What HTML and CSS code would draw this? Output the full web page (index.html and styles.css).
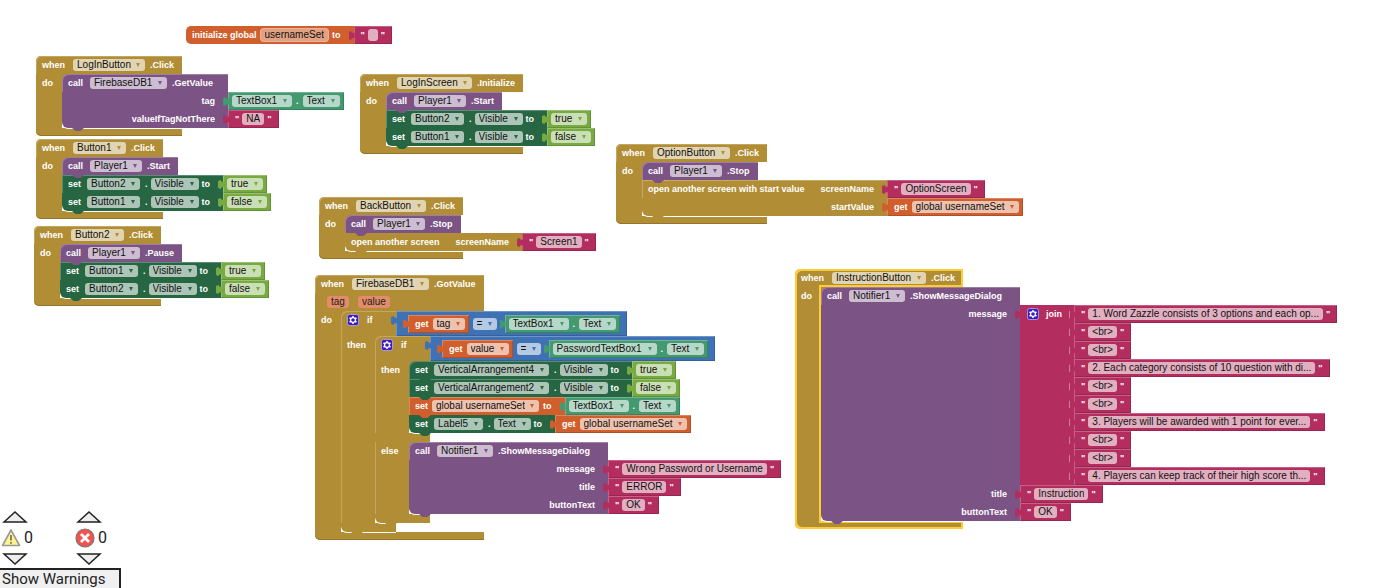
FILE: index.html
```html
<!DOCTYPE html>
<html lang="en">
<head>
<meta charset="utf-8">
<title>Blocks workspace</title>
<link rel="stylesheet" href="styles.css">
</head>
<body>
<svg class="defs" aria-hidden="true">
  <symbol id="gear" viewBox="0 0 12 12">
    <rect x=".5" y=".5" width="11" height="11" rx="2" fill="#3a1cc0" stroke="#b9aee6" stroke-width=".8"/>
    <path d="M6 2v8M2.500 4l7 4M2.500 8l7-4" stroke="#fff" stroke-width="1.500"/>
    <circle cx="6" cy="6" r="2.400" fill="#3a1cc0" stroke="#fff" stroke-width="1.200"/>
  </symbol>
</svg>
<main class="workspace">

  <div class="root at-global line">
    <div class="label orange arg rounded">initialize global <input class="name" aria-label="Variable name" value="usernameSet"> to</div>
    <div class="value text pink">"<input class="blank" aria-label="Initial value" value=" ">"</div>
  </div>

  <section class="root event at-login">
    <div class="head gold">when <span class="pick"><select aria-label="Component"><option>LogInButton</option></select></span><span>.Click</span></div>
    <div class="body">
      <div class="rail gold">do</div>
      <div class="stack">
        <div class="stmt purple">
          <div class="label arg call">call <span class="pick"><select aria-label="Component"><option>FirebaseDB1</option></select></span><span>.GetValue</span></div>
          <div class="label arg param">tag</div>
          <div class="value teal"><span class="pick"><select aria-label="Component"><option>TextBox1</option></select></span>.<span class="pick"><select aria-label="Property"><option>Text</option></select></span></div>
          <div class="label arg param">valueIfTagNotThere</div>
          <div class="value text pink">"<input aria-label="Default value" value="NA">"</div>
        </div>
      </div>
    </div>
    <div class="foot gold"></div>
  </section>

  <section class="root event at-button1">
    <div class="head gold">when <span class="pick"><select aria-label="Component"><option>Button1</option></select></span><span>.Click</span></div>
    <div class="body">
      <div class="rail gold">do</div>
      <div class="stack">
        <div class="stmt purple">
          <div class="label">call <span class="pick"><select aria-label="Component"><option>Player1</option></select></span><span>.Start</span></div>
        </div>
        <div class="stmt green">
          <div class="label arg set">set <span class="pick"><select aria-label="Component"><option>Button2</option></select></span>.<span class="pick"><select aria-label="Property"><option>Visible</option></select></span><span>to</span></div>
          <div class="value lime"><span class="pick"><select aria-label="Value"><option>true</option></select></span></div>
        </div>
        <div class="stmt green">
          <div class="label arg set">set <span class="pick"><select aria-label="Component"><option>Button1</option></select></span>.<span class="pick"><select aria-label="Property"><option>Visible</option></select></span><span>to</span></div>
          <div class="value lime"><span class="pick"><select aria-label="Value"><option>false</option></select></span></div>
        </div>
      </div>
    </div>
    <div class="foot gold"></div>
  </section>

  <section class="root event at-button2">
    <div class="head gold">when <span class="pick"><select aria-label="Component"><option>Button2</option></select></span><span>.Click</span></div>
    <div class="body">
      <div class="rail gold">do</div>
      <div class="stack">
        <div class="stmt purple">
          <div class="label">call <span class="pick"><select aria-label="Component"><option>Player1</option></select></span><span>.Pause</span></div>
        </div>
        <div class="stmt green">
          <div class="label arg set">set <span class="pick"><select aria-label="Component"><option>Button1</option></select></span>.<span class="pick"><select aria-label="Property"><option>Visible</option></select></span><span>to</span></div>
          <div class="value lime"><span class="pick"><select aria-label="Value"><option>true</option></select></span></div>
        </div>
        <div class="stmt green">
          <div class="label arg set">set <span class="pick"><select aria-label="Component"><option>Button2</option></select></span>.<span class="pick"><select aria-label="Property"><option>Visible</option></select></span><span>to</span></div>
          <div class="value lime"><span class="pick"><select aria-label="Value"><option>false</option></select></span></div>
        </div>
      </div>
    </div>
    <div class="foot gold"></div>
  </section>

  <section class="root event at-screen">
    <div class="head gold">when <span class="pick"><select aria-label="Component"><option>LogInScreen</option></select></span><span>.Initialize</span></div>
    <div class="body">
      <div class="rail gold">do</div>
      <div class="stack">
        <div class="stmt purple">
          <div class="label">call <span class="pick"><select aria-label="Component"><option>Player1</option></select></span><span>.Start</span></div>
        </div>
        <div class="stmt green">
          <div class="label arg set">set <span class="pick"><select aria-label="Component"><option>Button2</option></select></span>.<span class="pick"><select aria-label="Property"><option>Visible</option></select></span><span>to</span></div>
          <div class="value lime"><span class="pick"><select aria-label="Value"><option>true</option></select></span></div>
        </div>
        <div class="stmt green">
          <div class="label arg set">set <span class="pick"><select aria-label="Component"><option>Button1</option></select></span>.<span class="pick"><select aria-label="Property"><option>Visible</option></select></span><span>to</span></div>
          <div class="value lime"><span class="pick"><select aria-label="Value"><option>false</option></select></span></div>
        </div>
      </div>
    </div>
    <div class="foot gold"></div>
  </section>

  <section class="root event at-option">
    <div class="head gold">when <span class="pick"><select aria-label="Component"><option>OptionButton</option></select></span><span>.Click</span></div>
    <div class="body">
      <div class="rail gold">do</div>
      <div class="stack">
        <div class="stmt purple">
          <div class="label">call <span class="pick"><select aria-label="Component"><option>Player1</option></select></span><span>.Stop</span></div>
        </div>
        <div class="stmt gold">
          <div class="label arg open">open another screen with start value <span>screenName</span></div>
          <div class="value text pink">"<input aria-label="Screen name" value="OptionScreen">"</div>
          <div class="label arg param">startValue</div>
          <div class="value get orange">get <span class="pick"><select aria-label="Variable"><option>global usernameSet</option></select></span></div>
        </div>
      </div>
    </div>
    <div class="foot gold"></div>
  </section>

  <section class="root event at-back">
    <div class="head gold">when <span class="pick"><select aria-label="Component"><option>BackButton</option></select></span><span>.Click</span></div>
    <div class="body">
      <div class="rail gold">do</div>
      <div class="stack">
        <div class="stmt purple">
          <div class="label">call <span class="pick"><select aria-label="Component"><option>Player1</option></select></span><span>.Stop</span></div>
        </div>
        <div class="stmt gold">
          <div class="label arg open">open another screen <span>screenName</span></div>
          <div class="value text pink">"<input aria-label="Screen name" value="Screen1">"</div>
        </div>
      </div>
    </div>
    <div class="foot gold"></div>
  </section>

  <section class="root event at-firebase">
    <div class="head gold">when <span class="pick"><select aria-label="Component"><option>FirebaseDB1</option></select></span><span>.GotValue</span></div>
    <div class="params gold"><span class="chip">tag</span><span class="chip">value</span></div>
    <div class="body">
      <div class="rail gold">do</div>
      <div class="stack">
        <div class="stmt branch gold">
          <div class="branch-head">
            <div class="test"><svg class="gear"><use href="#gear"/></svg>if</div>
            <div class="value compare blue">
              <div class="value get orange">get <span class="pick"><select aria-label="Variable"><option>tag</option></select></span></div>
              <span class="pick op"><select aria-label="Operator"><option>=</option></select></span>
              <div class="value teal"><span class="pick"><select aria-label="Component"><option>TextBox1</option></select></span>.<span class="pick"><select aria-label="Property"><option>Text</option></select></span></div>
            </div>
          </div>
          <div class="rail">then</div>
          <div class="stack">
            <div class="stmt branch gold">
              <div class="branch-head">
                <div class="test"><svg class="gear"><use href="#gear"/></svg>if</div>
                <div class="value compare blue">
                  <div class="value get orange">get <span class="pick"><select aria-label="Variable"><option>value</option></select></span></div>
                  <span class="pick op"><select aria-label="Operator"><option>=</option></select></span>
                  <div class="value teal"><span class="pick"><select aria-label="Component"><option>PasswordTextBox1</option></select></span>.<span class="pick"><select aria-label="Property"><option>Text</option></select></span></div>
                </div>
              </div>
              <div class="rail">then</div>
              <div class="stack">
                <div class="stmt green">
                  <div class="label arg set">set <span class="pick"><select aria-label="Component"><option>VerticalArrangement4</option></select></span>.<span class="pick"><select aria-label="Property"><option>Visible</option></select></span><span>to</span></div>
                  <div class="value lime"><span class="pick"><select aria-label="Value"><option>true</option></select></span></div>
                </div>
                <div class="stmt green">
                  <div class="label arg set">set <span class="pick"><select aria-label="Component"><option>VerticalArrangement2</option></select></span>.<span class="pick"><select aria-label="Property"><option>Visible</option></select></span><span>to</span></div>
                  <div class="value lime"><span class="pick"><select aria-label="Value"><option>false</option></select></span></div>
                </div>
                <div class="stmt orange">
                  <div class="label arg var">set <span class="pick"><select aria-label="Variable"><option>global usernameSet</option></select></span> to</div>
                  <div class="value teal"><span class="pick"><select aria-label="Component"><option>TextBox1</option></select></span>.<span class="pick"><select aria-label="Property"><option>Text</option></select></span></div>
                </div>
                <div class="stmt green">
                  <div class="label arg set">set <span class="pick"><select aria-label="Component"><option>Label5</option></select></span>.<span class="pick"><select aria-label="Property"><option>Text</option></select></span><span>to</span></div>
                  <div class="value get orange">get <span class="pick"><select aria-label="Variable"><option>global usernameSet</option></select></span></div>
                </div>
              </div>
              <div class="bar"></div>
              <div class="rail">else</div>
              <div class="stack">
                <div class="stmt purple">
                  <div class="label arg call long">call <span class="pick"><select aria-label="Component"><option>Notifier1</option></select></span><span>.ShowMessageDialog</span></div>
                  <div class="label arg param">message</div>
                  <div class="value text pink">"<input aria-label="Message" value="Wrong Password or Username">"</div>
                  <div class="label arg param">title</div>
                  <div class="value text pink">"<input aria-label="Title" value="ERROR">"</div>
                  <div class="label arg param">buttonText</div>
                  <div class="value text pink">"<input aria-label="Button text" value="OK">"</div>
                </div>
              </div>
              <div class="bar"></div>
            </div>
          </div>
          <div class="bar"></div>
        </div>
      </div>
    </div>
    <div class="foot gold"></div>
  </section>

  <section class="root event selected at-instruction">
    <div class="head gold">when <span class="pick"><select aria-label="Component"><option>InstructionButton</option></select></span><span>.Click</span></div>
    <div class="body">
      <div class="rail gold">do</div>
      <div class="stack">
        <div class="stmt purple">
          <div class="label arg call long">call <span class="pick"><select aria-label="Component"><option>Notifier1</option></select></span><span>.ShowMessageDialog</span></div>
          <div class="label arg param">message</div>
          <div class="value join pink">
            <div class="join-label pink"><svg class="gear"><use href="#gear"/></svg>join</div>
            <div class="items">
              <div class="value text pink">"<input aria-label="Line 1" value="1. Word Zazzle consists of 3 options and each op...">"</div>
              <div class="value text pink">"<input aria-label="Line 2" value="&lt;br&gt;">"</div>
              <div class="value text pink">"<input aria-label="Line 3" value="&lt;br&gt;">"</div>
              <div class="value text pink">"<input aria-label="Line 4" value="2. Each category consists of 10 question with di...">"</div>
              <div class="value text pink">"<input aria-label="Line 5" value="&lt;br&gt;">"</div>
              <div class="value text pink">"<input aria-label="Line 6" value="&lt;br&gt;">"</div>
              <div class="value text pink">"<input aria-label="Line 7" value="3. Players will be awarded with 1 point for ever...">"</div>
              <div class="value text pink">"<input aria-label="Line 8" value="&lt;br&gt;">"</div>
              <div class="value text pink">"<input aria-label="Line 9" value="&lt;br&gt;">"</div>
              <div class="value text pink">"<input aria-label="Line 10" value="4. Players can keep track of their high score th...">"</div>
            </div>
          </div>
          <div class="label arg param">title</div>
          <div class="value text pink">"<input aria-label="Title" value="Instruction">"</div>
          <div class="label arg param">buttonText</div>
          <div class="value text pink">"<input aria-label="Button text" value="OK">"</div>
        </div>
      </div>
    </div>
    <div class="foot gold"></div>
  </section>

  <aside class="issues">
    <div class="counters">
      <div class="counter">
        <button aria-label="Previous warning"><svg width="26" height="13" viewBox="0 0 26 13"><path d="M2 12 13 2l11 10z" fill="#eee" stroke="#222" stroke-width="1.500"/></svg></button>
        <div class="count"><svg width="20" height="20" viewBox="0 0 20 20"><path d="M10 2 18.500 17.500h-17z" fill="#fdf58c" stroke="#999" stroke-width="1.600" stroke-linejoin="round"/><path d="M10 7v5.500M10 14v1.800" stroke="#777" stroke-width="1.800"/></svg>0</div>
        <button aria-label="Next warning"><svg width="26" height="13" viewBox="0 0 26 13"><path d="M2 1 13 11 24 1z" fill="#eee" stroke="#222" stroke-width="1.500"/></svg></button>
      </div>
      <div class="counter">
        <button aria-label="Previous error"><svg width="26" height="13" viewBox="0 0 26 13"><path d="M2 12 13 2l11 10z" fill="#eee" stroke="#222" stroke-width="1.500"/></svg></button>
        <div class="count"><svg width="20" height="20" viewBox="0 0 20 20"><circle cx="10" cy="10" r="9" fill="#f4524f" stroke="#777" stroke-width="1.200"/><path d="m6 6 8 8m0-8-8 8" stroke="#fff" stroke-width="2.800"/></svg>0</div>
        <button aria-label="Next error"><svg width="26" height="13" viewBox="0 0 26 13"><path d="M2 1 13 11 24 1z" fill="#eee" stroke="#222" stroke-width="1.500"/></svg></button>
      </div>
    </div>
    <button class="toggle">Show Warnings</button>
  </aside>
</main>
</body>
</html>
```

FILE: styles.css
```css
* { box-sizing: border-box; }

body {
  margin: 0;
  background: #fff;
  font-family: "Liberation Sans", Arial, sans-serif;
}

.defs { position: absolute; width: 0; height: 0; }

.workspace {
  position: relative;
  height: 100vh;
  overflow: hidden;
  color: #fff;
  font-size: 9px;
  font-weight: bold;
  line-height: 18px;
}

/* block colours */
.gold { background-color: #b18e35; --c: #b18e35; }
.purple { --c: #7c5385; }
.green { --c: #266643; }
.teal { background-color: #439970; --c: #439970; }
.pink { background-color: #b32d5e; --c: #b32d5e; }
.orange { background-color: #d05f2d; --c: #d05f2d; }
.lime { background-color: #77ab41; --c: #77ab41; }
.blue { background-color: #3f71b5; --c: #3f71b5; }
.stmt { background-color: transparent; }

/* positions of the top-level blocks on the canvas */
.root { position: absolute; }
.at-global { left: 186px; top: 26px; }
.at-login { left: 36px; top: 56px; }
.at-button1 { left: 36px; top: 139px; }
.at-button2 { left: 34px; top: 226px; }
.at-screen { left: 360px; top: 74px; }
.at-option { left: 616px; top: 144px; }
.at-back { left: 319px; top: 197px; }
.at-firebase { left: 315px; top: 275px; }
.at-instruction { left: 795px; top: 269px; }

.line { display: flex; }

.head,
.label,
.value {
  display: flex;
  align-items: center;
  white-space: nowrap;
  height: 18px;
}

/* event blocks */
.head {
  gap: 7px;
  padding: 0 8px 0 6px;
  border-radius: 5px 0 0 0;
  box-shadow: inset 1px 1px 0 #c4a75f;
}
.head .pick { margin-left: 1px; }
.head .pick + span,
.label .pick + span { margin-left: -2px; }

.body {
  display: flex;
  width: 0;
  min-width: 100%;
}

.rail {
  flex: none;
  width: 26px;
  padding-left: 6px;
}

.foot {
  height: 8px;
  border-radius: 0 0 0 5px;
  box-shadow: inset 0 -1px 0 #94762b;
}

.params {
  display: flex;
  align-items: center;
  gap: 9px;
  height: 18px;
  padding-left: 12px;
}

.chip {
  padding: 0 4px;
  border-radius: 3px;
  background: #e28c69;
  color: #222;
  font-size: 10px;
  font-weight: normal;
  line-height: 12px;
}

/* statements */
.stack {
  position: relative;
  z-index: 1;
  width: max-content;
  background:
    linear-gradient(#b18e35, #b18e35) no-repeat 0 0 / 8px 8px,
    linear-gradient(#fff, #fff) no-repeat 0 100% / 8px 8px;
}

.stmt {
  position: relative;
  display: grid;
  grid-template-columns: max-content max-content;
}

.stmt::after {
  content: "";
  position: absolute;
  z-index: 2;
  left: 10px;
  top: 100%;
  width: 12px;
  height: 3px;
  background: var(--c);
  clip-path: polygon(0 0, 100% 0, 70% 100%, 30% 100%);
}

.label {
  grid-column: 1;
  gap: 7px;
  padding: 0 8px 0 6px;
  background: var(--c);
}

.stmt > .label:first-child { box-shadow: inset 1px 1px 0 rgb(255 255 255 / 25%); }
.stmt:first-child > .label:first-child { border-top-left-radius: 6px; }
.stmt:last-child > .label:nth-last-child(-n+2) {
  border-bottom-left-radius: 6px;
  box-shadow: 0 1px 0 #fff;
}

.label.arg { padding-right: 13px; }
.label.call { padding-right: 15px; }
.label.long { padding-right: 18px; }
.label.open { gap: 16px; }
.label.set { gap: 5px; }
.label.set > .pick:first-of-type { margin-left: 1px; }
.label.param { justify-content: flex-end; height: auto; align-items: flex-start; }
.label.rounded { border-radius: 5px 0 0 5px; gap: 4px; }
.label.var { gap: 4px; }

/* value blocks */
.value {
  position: relative;
  width: max-content;
  gap: 4px;
  padding: 0 4px;
  box-shadow: inset 1px 1px 0 rgb(255 255 255 / 25%), inset -1px -1px 0 rgb(0 0 0 / 15%);
}

.value::before {
  content: "";
  position: absolute;
  left: -5px;
  top: 5px;
  width: 6px;
  height: 9px;
  background: var(--c);
  clip-path: polygon(0 10%, 40% 0, 60% 20%, 100% 20%, 100% 80%, 60% 80%, 40% 100%, 0 90%);
}

.text { gap: 3px; padding: 0 7px; }
.get { padding-left: 7px; }

.compare {
  height: auto;
  padding: 4px 7px 4px 12px;
}
.compare .op { margin-right: 4px; }

.join { height: auto; padding: 0; align-items: stretch; gap: 0; background: none; box-shadow: none; }
.join-label { display: flex; align-items: flex-start; gap: 7px; width: 54px; padding-left: 7px; }
.join-label .gear { margin-top: 3px; }
.items .value::before { box-shadow: inset 1px 0 0 rgb(255 255 255 / 40%); }

/* conditional blocks */
.branch {
  grid-template-columns: 34px max-content;
  background: none;
}
.branch > .rail { width: 34px; background: #b18e35; box-shadow: inset 1px 0 0 #c4a75f; }
.branch-head { grid-column: 1 / -1; display: flex; height: 25px; }
.test {
  display: flex;
  align-items: center;
  gap: 8px;
  width: 55px;
  height: 25px;
  padding: 0 0 8px 6px;
  border-radius: 6px 0 0 0;
  background: #b18e35;
  box-shadow: inset 1px 1px 0 #c4a75f;
}
.bar {
  grid-column: 1 / -1;
  width: 55px;
  height: 9px;
  background: #b18e35;
}
.bar:last-child { border-radius: 0 0 0 6px; box-shadow: 0 1px 0 #fff; }

.gear { width: 12px; height: 12px; }

/* fields */
.pick { position: relative; display: flex; }

.pick::after {
  content: "";
  position: absolute;
  right: 5px;
  top: 4px;
  border: solid transparent;
  border-width: 4px 2px 0;
  border-top-color: var(--c);
  pointer-events: none;
}

select,
input {
  appearance: none;
  height: 12px;
  margin: 0;
  border: 0;
  border-radius: 3px;
  background: rgb(255 255 255 / 62%);
  color: #111;
  font: 10px/12px "Liberation Sans", Arial, sans-serif;
}

select { padding: 0 14px 0 4px; }
input { field-sizing: content; padding: 0 4px; }
.name { background: #e3a183; box-shadow: 0 0 0 1px #e8b49c; }
.blank { width: 10px; }

/* selected block */
.selected .head {
  background-image: linear-gradient(#fc3, #fc3);
  background-repeat: no-repeat;
  background-position: 24px 100%;
  background-size: 100% 2px;
  box-shadow: inset 2px 2px 0 #fc3, inset -2px 0 0 #fc3;
}
.selected .rail { box-shadow: inset 2px 0 0 #fc3, inset -2px 0 0 #fc3; }
.selected .foot {
  background-image: linear-gradient(#fc3, #fc3);
  background-repeat: no-repeat;
  background-position: 24px 0;
  background-size: 100% 2px;
  box-shadow: inset 2px -2px 0 #fc3, inset -2px 0 0 #fc3;
}

/* warnings panel */
.issues {
  position: absolute;
  left: 0;
  bottom: 0;
  color: #222;
  font: 16px/20px Roboto, sans-serif;
}
.counters { display: flex; gap: 40px; padding: 0 0 2px 2px; }
.counter { display: grid; gap: 5px; width: 34px; }
.counter button {
  display: flex;
  width: 26px;
  padding: 0;
  border: 0;
  background: none;
}
.count { display: flex; align-items: center; gap: 3px; margin-left: -1px; }
.toggle {
  display: block;
  width: 121px;
  padding: 0 2px;
  border: solid #222;
  border-width: 2px 2px 0 0;
  background: #f0f0f0;
  color: #222;
  font: 15px/18px Roboto, sans-serif;
  text-align: left;
  white-space: nowrap;
}
```
